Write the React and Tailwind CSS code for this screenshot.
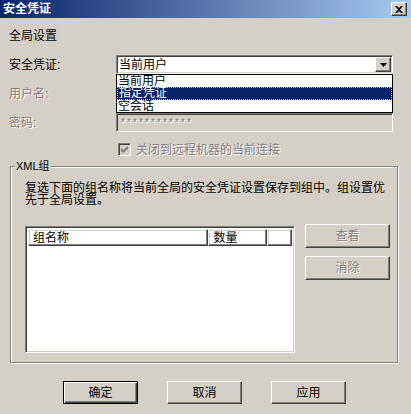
import React from "react";

const sunken =
  "border border-t-[#808080] border-l-[#808080] border-b-white border-r-white shadow-[inset_1px_1px_0_#404040,inset_-1px_-1px_0_#d4d0c8]";
const raised =
  "border border-t-white border-l-white border-b-[#404040] border-r-[#404040] shadow-[inset_-1px_-1px_0_#808080,inset_1px_1px_0_#d4d0c8]";
const emboss = "text-[#808080] [text-shadow:1px_1px_0_#ffffff]";

function Btn({ children, disabled, def, className = "" }) {
  const cls = def
    ? "border border-black shadow-[inset_1px_1px_0_#ffffff,inset_-1px_-1px_0_#404040,inset_-2px_-2px_0_#808080]"
    : raised;
  return (
    <div
      className={`${cls} bg-[#d4d0c8] flex items-center justify-center ${
        disabled ? emboss : "text-black"
      } ${className}`}
    >
      {children}
    </div>
  );
}

export default function App() {
  return (
    <div className="w-[411px] h-[414px] bg-[#d4d0c8] flex flex-col text-[12px] leading-[12px] text-black overflow-hidden font-['Liberation_Sans','Noto_Sans_CJK_SC',sans-serif]">
      {/* Title bar */}
      <div className="h-[18px] flex items-center justify-between pl-[3px] pr-[4px] bg-[linear-gradient(90deg,#0a246a,#a6caf0)]">
        <span className="text-white font-bold text-[12px] leading-[12px]">安全凭证</span>
        <div className={`${raised} bg-[#d4d0c8] w-[16px] h-[14px] flex items-center justify-center`}>
          <svg width="8" height="7" viewBox="0 0 8 7">
            <path d="M0 0h2l2 2 2-2h2L5 3.5 8 7H6L4 5 2 7H0l3-3.5z" fill="#000" />
          </svg>
        </div>
      </div>

      {/* Body */}
      <div className="relative flex-1 flex flex-col px-[9px]">
        <div className="mt-[12px] h-[12px]">全局设置</div>

        <div className="mt-[13px] flex items-center h-[19px]">
          <div className="w-[107px]">安全凭证:</div>
          <div className={`${sunken} bg-white w-[277px] h-[19px] flex items-center justify-between pl-[2px] pr-[1px]`}>
            <span>当前用户</span>
            <div className={`${raised} bg-[#d4d0c8] w-[16px] h-[15px] flex items-center justify-center`}>
              <svg width="7" height="4" viewBox="0 0 7 4">
                <path d="M0 0h7L3.5 4z" fill="#000" />
              </svg>
            </div>
          </div>
        </div>

        <div className="mt-[10px] flex items-center h-[19px]">
          <div className={`w-[107px] ${emboss}`}>用户名:</div>
          <div className={`${sunken} bg-[#d4d0c8] w-[277px] h-[19px]`} />
        </div>

        <div className="mt-[10px] flex items-center h-[19px]">
          <div className={`w-[107px] ${emboss}`}>密码:</div>
          <div className={`${sunken} bg-[#d4d0c8] w-[277px] h-[19px] flex items-center pl-[3px]`}>
            <span className={`${emboss} font-['Liberation_Mono',monospace] text-[10px] leading-[10px] pt-[2px]`}>
              ************
            </span>
          </div>
        </div>

        <div className="mt-[11px] ml-[109px] flex items-center h-[13px] gap-[5px]">
          <div className={`${sunken} bg-[#d4d0c8] w-[13px] h-[13px] flex items-center justify-center`}>
            <svg width="7" height="7" viewBox="0 0 7 7">
              <path d="M0 2l2 2 5-4v3L2 7 0 5z" fill="#808080" />
            </svg>
          </div>
          <span className={emboss}>关闭到远程机器的当前连接</span>
        </div>

        {/* Group */}
        <div className="relative mt-[10px] ml-[1px] w-[388px] h-[197px] border border-[#808080] shadow-[1px_1px_0_#ffffff,inset_1px_1px_0_#ffffff] flex flex-col pl-[14px]">
          <span className="absolute left-[4px] top-[-7px] bg-[#d4d0c8] px-[1px] text-[11px] leading-[12px]">
            XML组
          </span>
          <div className="mt-[15px] leading-[12px]">
            复选下面的组名称将当前全局的安全凭证设置保存到组中。组设置优
            <br />
            先于全局设置。
          </div>
          <div className="mt-[18px] flex items-start">
            <div className={`${sunken} bg-white mt-[2px] w-[270px] h-[127px] flex flex-col p-[2px] pb-0`}>
              <div className="flex h-[17px]">
                <div className={`${raised} w-[181px] h-[17px] flex items-center pl-[4px]`}>组名称</div>
                <div className={`${raised} w-[60px] h-[17px] flex items-center pl-[5px]`}>数量</div>
                <div className={`${raised} w-[25px] h-[17px]`} />
              </div>
            </div>
            <div className="ml-[10px] flex flex-col gap-[8px]">
              <Btn disabled className="w-[85px] h-[24px]">查看</Btn>
              <Btn disabled className="w-[85px] h-[24px]">消除</Btn>
            </div>
          </div>
        </div>

        {/* Bottom buttons */}
        <div className="mt-[18px] ml-[54px] flex gap-[29px]">
          <Btn def className="w-[75px] h-[23px]">确定</Btn>
          <Btn className="w-[75px] h-[23px]">取消</Btn>
          <Btn className="w-[75px] h-[23px]">应用</Btn>
        </div>

        {/* Dropdown list (overlay) */}
        <div className="absolute left-[116px] top-[56px] w-[277px] bg-white border border-black flex flex-col">
          <div className="h-[12px] pl-[1px] leading-[12px]">当前用户</div>
          <div className="h-[13px] pl-[1px] bg-[#0a246a] text-white border border-dotted border-[#c0c0c0] leading-[11px] flex items-center">
            指定凭证
          </div>
          <div className="h-[12px] pl-[1px] leading-[12px]">空会话</div>
        </div>
      </div>
    </div>
  );
}
